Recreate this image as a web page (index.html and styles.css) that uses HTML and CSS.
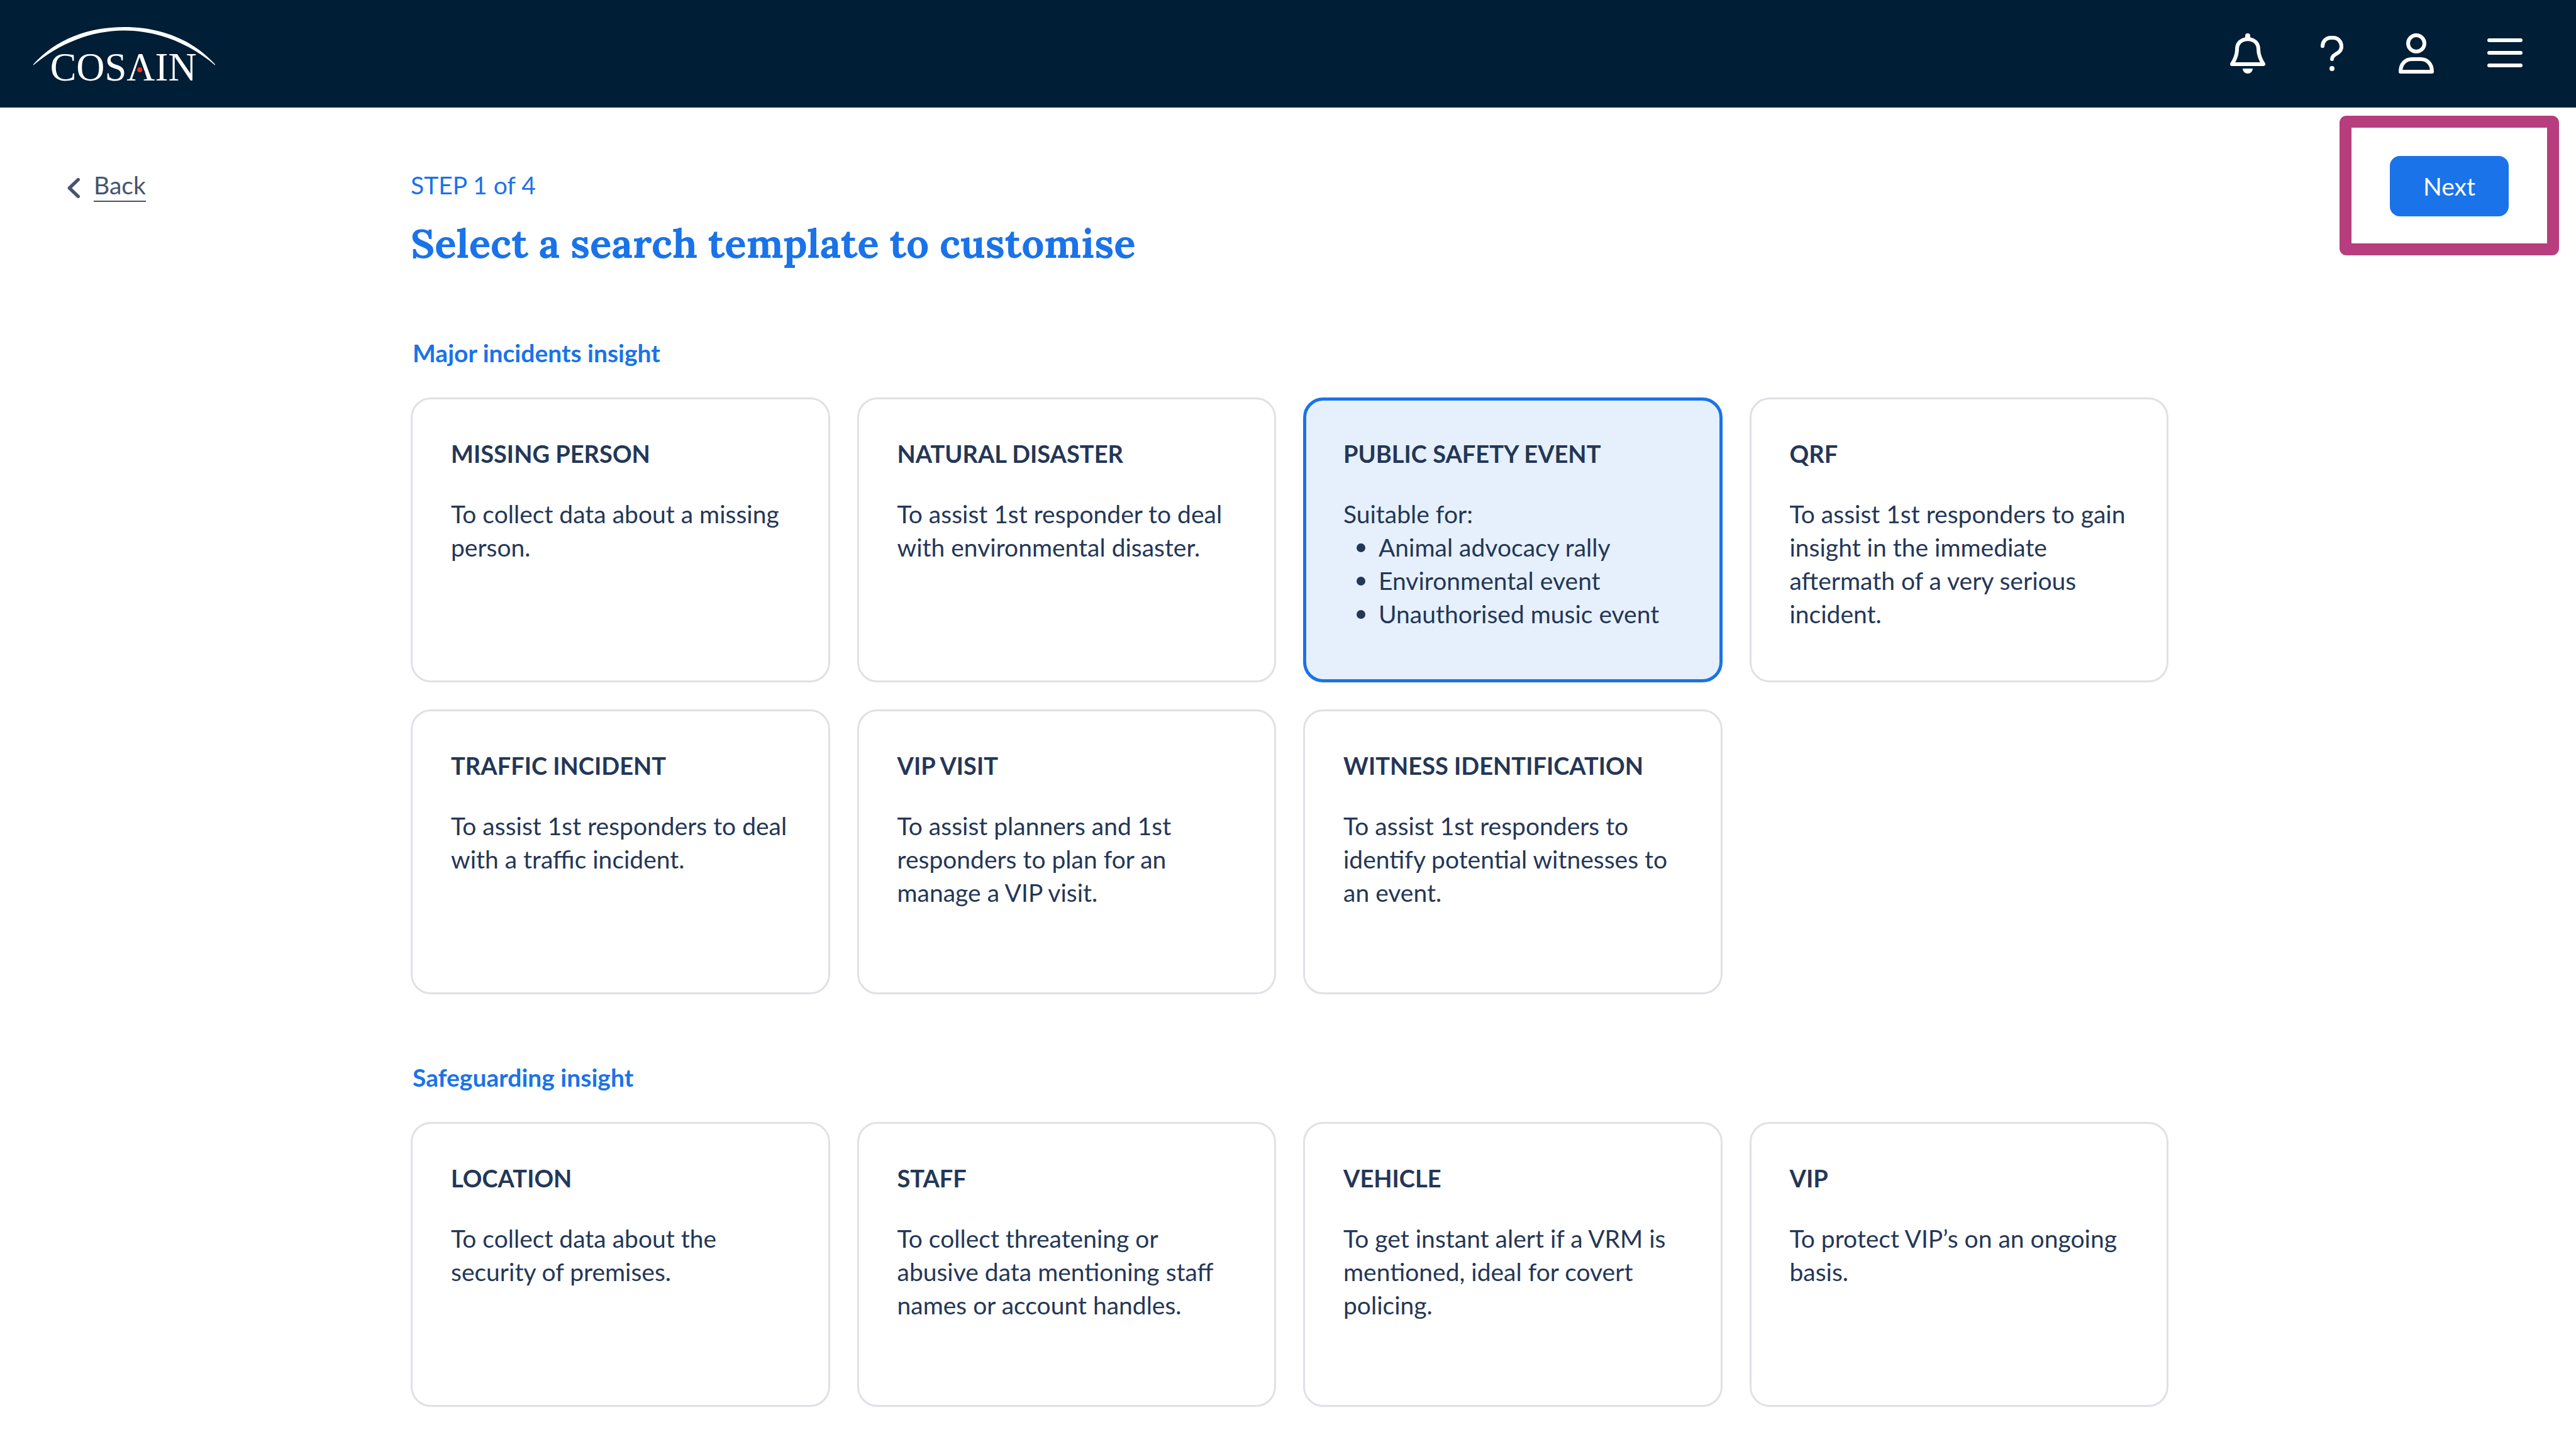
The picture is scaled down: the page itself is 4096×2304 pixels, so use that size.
FILE: index.html
```html
<!DOCTYPE html>
<html lang="en">
<head>
<meta charset="utf-8">
<title>Cosain – Select a search template</title>
<link rel="stylesheet" href="styles.css">
</head>
<body>
<header class="topbar">
  <a class="topbar__logo" href="#" aria-label="Cosain home">
    <svg class="logo" viewBox="80 64 434 132">
      <path fill="#fff" d="M80 153C135 92 212 64 297 64C382 64 459 92 514 153V155C452 103 376 72 297 72C218 72 142 103 80 155Z"/>
      <text class="logo__text" x="120" y="191">COSAIN</text>
      <path class="logo__gap" d="M334 142L347 172H321Z"/>
      <circle cx="334" cy="166" r="6" fill="#ee2e24"/>
    </svg>
  </a>
  <nav class="topbar__actions" aria-label="Account">
    <button class="icon-button" type="button" aria-label="Notifications">
      <svg class="icon" viewBox="0 0 96 96">
        <path d="M10.500 73.500C18 62 22.500 52 22.500 38C22.500 23 33 13.700 48 13.700C63 13.700 73.500 23 73.500 38C73.500 52 78 62 85.500 73.500Z"/>
        <path stroke-width="12" d="M48 6V12"/>
        <path class="icon__solid" d="M36 84H60A12 12 0 0 1 36 84Z"/>
      </svg>
    </button>
    <button class="icon-button" type="button" aria-label="Help">
      <svg class="icon" viewBox="0 0 96 96">
        <path d="M25.500 30.500C25.500 19 34 10.500 45 10.500H51C62 10.500 70.500 20 70.500 31.500C70.500 50 48 48 48 61.500"/>
        <circle class="icon__solid" cx="48" cy="84" r="6"/>
      </svg>
    </button>
    <button class="icon-button" type="button" aria-label="Profile">
      <svg class="icon" viewBox="0 0 96 96">
        <circle cx="48" cy="24" r="19.500"/>
        <path d="M10.500 91.500C10.500 73 22 61.500 38 61.500H58C74 61.500 85.500 73 85.500 91.500Z"/>
      </svg>
    </button>
    <button class="icon-button icon-button--menu" type="button" aria-label="Menu">
      <svg class="icon" viewBox="0 0 96 96">
        <path d="M10.500 16.500H85.500M10.500 46.500H85.500M10.500 76.500H85.500"/>
      </svg>
    </button>
  </nav>
</header>

<main class="page">
  <div class="page__back">
    <a class="back" href="#">
      <svg class="back__icon" viewBox="0 0 30 48"><path d="M26 4L5 24L26 44"/></svg>
      <span class="back__label">Back</span>
    </a>
  </div>

  <div class="page__content">
    <p class="step">STEP 1 of 4</p>
    <h1 class="title">Select a search template to customise</h1>

    <section class="group">
      <h2 class="group__title">Major incidents insight</h2>
      <div class="cards">
        <div class="card">
          <input class="card__radio" type="radio" name="template" id="missing-person">
          <label class="card__title" for="missing-person">MISSING PERSON</label>
          <p class="card__text">To collect data about a missing person.</p>
        </div>
        <div class="card">
          <input class="card__radio" type="radio" name="template" id="natural-disaster">
          <label class="card__title" for="natural-disaster">NATURAL DISASTER</label>
          <p class="card__text">To assist 1st responder to deal with environmental disaster.</p>
        </div>
        <div class="card">
          <input class="card__radio" type="radio" name="template" id="public-safety" checked>
          <label class="card__title" for="public-safety">PUBLIC SAFETY EVENT</label>
          <p class="card__text">Suitable for:</p>
          <ul class="card__list">
            <li>Animal advocacy rally</li>
            <li>Environmental event</li>
            <li>Unauthorised music event</li>
          </ul>
        </div>
        <div class="card">
          <input class="card__radio" type="radio" name="template" id="qrf">
          <label class="card__title" for="qrf">QRF</label>
          <p class="card__text">To assist 1st responders to gain insight in the immediate aftermath of a very serious incident.</p>
        </div>
        <div class="card">
          <input class="card__radio" type="radio" name="template" id="traffic">
          <label class="card__title" for="traffic">TRAFFIC INCIDENT</label>
          <p class="card__text">To assist 1st responders to deal with a traffic incident.</p>
        </div>
        <div class="card">
          <input class="card__radio" type="radio" name="template" id="vip-visit">
          <label class="card__title" for="vip-visit">VIP VISIT</label>
          <p class="card__text">To assist planners and 1st responders to plan for an manage a VIP visit.</p>
        </div>
        <div class="card">
          <input class="card__radio" type="radio" name="template" id="witness">
          <label class="card__title" for="witness">WITNESS IDENTIFICATION</label>
          <p class="card__text">To assist 1st responders to identify potential witnesses to an event.</p>
        </div>
      </div>
    </section>

    <section class="group">
      <h2 class="group__title">Safeguarding insight</h2>
      <div class="cards">
        <div class="card">
          <input class="card__radio" type="radio" name="template" id="location">
          <label class="card__title" for="location">LOCATION</label>
          <p class="card__text">To collect data about the security of premises.</p>
        </div>
        <div class="card">
          <input class="card__radio" type="radio" name="template" id="staff">
          <label class="card__title" for="staff">STAFF</label>
          <p class="card__text">To collect threatening or abusive data mentioning staff names or account handles.</p>
        </div>
        <div class="card">
          <input class="card__radio" type="radio" name="template" id="vehicle">
          <label class="card__title" for="vehicle">VEHICLE</label>
          <p class="card__text">To get instant alert if a VRM is mentioned, ideal for covert policing.</p>
        </div>
        <div class="card">
          <input class="card__radio" type="radio" name="template" id="vip">
          <label class="card__title" for="vip">VIP</label>
          <p class="card__text">To protect VIP’s on an ongoing basis.</p>
        </div>
      </div>
    </section>
  </div>

  <div class="page__next">
    <div class="callout">
      <button class="next" type="button">Next</button>
    </div>
  </div>
</main>
</body>
</html>
```
FILE: styles.css
```css
:root {
  --navy: #001e35;
  --blue: #1a73e8;
  --ink: #243757;
  --slate: #44546f;
}

* {
  box-sizing: border-box;
  margin: 0;
  padding: 0;
}

body {
  background: #fff;
  color: var(--ink);
  font: 39px/53px Lato, Carlito, sans-serif;
}

/* Top bar */
.topbar {
  display: flex;
  align-items: flex-start;
  justify-content: space-between;
  height: 171px;
  padding: 43px 81px 0 53px;
  background: var(--navy);
}

.topbar__logo,
.logo {
  display: block;
}

.logo {
  width: 289px;
  height: 88px;
  overflow: visible;
}

.logo__text {
  fill: #fff;
  font: 94px "Liberation Serif", serif;
}

.logo__gap {
  fill: var(--navy);
}

.topbar__actions {
  display: flex;
  gap: 70px;
  padding-top: 10px;
}

.icon-button {
  width: 64px;
  height: 64px;
  border: 0;
  background: none;
}

.icon-button--menu {
  margin-left: 7px;
}

.icon {
  display: block;
  width: 64px;
  height: 64px;
  fill: none;
  stroke: #fff;
  stroke-width: 9;
  stroke-linecap: round;
  stroke-linejoin: round;
}

.icon__solid {
  fill: #fff;
  stroke: none;
}

/* Page columns */
.page {
  display: grid;
  grid-template-columns: 653px minmax(0, 1fr) 648px;
}

.page__back {
  padding: 98px 0 0 107px;
}

.page__content {
  padding: 97px 0 67px;
}

.page__next {
  display: flex;
  align-items: flex-start;
  justify-content: flex-end;
  padding: 13px 27px 0 0;
}

.back {
  display: inline-flex;
  align-items: center;
  gap: 22px;
  color: var(--slate);
  line-height: 50px;
  text-decoration: none;
}

.back__icon {
  width: 20px;
  height: 32px;
  margin-top: 8px;
  fill: none;
  stroke: currentColor;
  stroke-width: 8;
  stroke-linecap: round;
  stroke-linejoin: round;
}

.back__label {
  border-bottom: 2px solid;
}

.callout {
  padding: 45px 61px 43px;
  border: 19px solid #b83d7e;
  border-radius: 11px;
}

.next {
  display: block;
  width: 189px;
  height: 96px;
  border: 0;
  border-radius: 16px;
  background: var(--blue);
  color: #fff;
  font: inherit;
}

.step {
  color: var(--blue);
}

.title {
  margin: 26px 0 108px;
  color: var(--blue);
  font: 700 64px/80px Lora, "Liberation Serif", serif;
}

/* Template groups */
.group + .group {
  margin-top: 106px;
}

.group__title {
  padding-left: 3px;
  color: var(--blue);
  font-size: 39px;
  font-weight: 700;
}

.cards {
  display: grid;
  grid-template-columns: repeat(4, minmax(0, 1fr));
  grid-auto-rows: minmax(453px, auto);
  gap: 43px;
  margin-top: 44px;
}

.card {
  position: relative;
  padding: 60px 61px 40px;
  border: 3px solid #e0e0e6;
  border-radius: 32px;
}

.card:has(:checked) {
  padding: 58px 59px 38px;
  border: 5px solid var(--blue);
  background: #e6f0fc;
}

.card__radio {
  position: absolute;
  inset: 0;
  width: 100%;
  height: 100%;
  appearance: none;
  border-radius: 32px;
}

.card__title {
  display: block;
  margin-bottom: 43px;
  font-size: 38px;
  font-weight: 700;
}

.card__list {
  list-style: none;
}

.card__list li {
  display: flex;
  align-items: center;
  gap: 21px;
  padding-left: 21px;
}

.card__list li::before {
  width: 14px;
  height: 14px;
  border-radius: 50%;
  background: currentColor;
  content: "";
}
```
